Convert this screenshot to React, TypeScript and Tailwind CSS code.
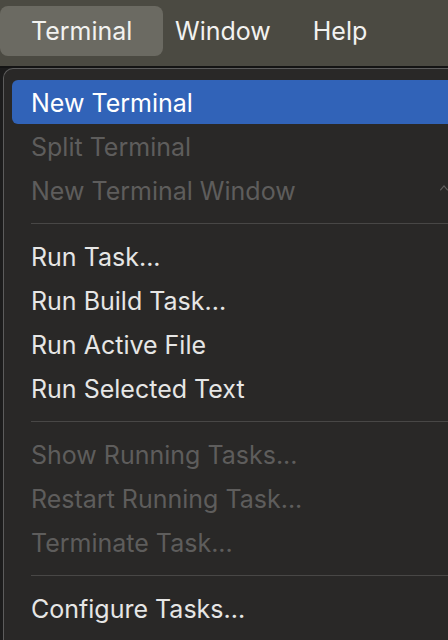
type Item =
  | { kind: "item"; label: string; disabled?: boolean; active?: boolean; shortcut?: boolean }
  | { kind: "sep" };

const ITEMS: Item[] = [
  { kind: "item", label: "New Terminal", active: true },
  { kind: "item", label: "Split Terminal", disabled: true },
  { kind: "item", label: "New Terminal Window", disabled: true, shortcut: true },
  { kind: "sep" },
  { kind: "item", label: "Run Task..." },
  { kind: "item", label: "Run Build Task..." },
  { kind: "item", label: "Run Active File" },
  { kind: "item", label: "Run Selected Text" },
  { kind: "sep" },
  { kind: "item", label: "Show Running Tasks...", disabled: true },
  { kind: "item", label: "Restart Running Task...", disabled: true },
  { kind: "item", label: "Terminate Task...", disabled: true },
  { kind: "sep" },
  { kind: "item", label: "Configure Tasks..." },
];

export default function App() {
  return (
    <div
      className="flex h-[640px] w-[448px] flex-col overflow-hidden bg-[#1c1c1c] text-[25px] antialiased"
      style={{ fontFamily: "Inter, 'Noto Sans', sans-serif" }}
    >
      <div className="flex h-[68px] shrink-0 items-start border-b-2 border-[#141414] bg-[#4b4a42] pt-[6px] text-[#f2f2f0]">
        <div className="flex h-[50px] w-[163px] items-center rounded-lg bg-[#6b6a62] pl-[31px] pt-[2px]">
          Terminal
        </div>
        <div className="ml-[12px] flex h-[50px] items-center pt-[2px]">Window</div>
        <div className="ml-[42px] flex h-[50px] items-center pt-[2px]">Help</div>
      </div>

      <div className="ml-[3px] flex-1 rounded-tl-[10px] border-l border-t border-[#5c5c5c] bg-[#292827] pl-[8px] pt-[11px]">
        {ITEMS.map((item, i) =>
          item.kind === "sep" ? (
            <div key={i} className="flex h-[22px] items-center pl-[19px]">
              <div className="h-px w-full bg-[#484746]" />
            </div>
          ) : (
            <div
              key={i}
              className={
                "flex h-[44px] items-center whitespace-nowrap pl-[19px] pt-[3px] " +
                (item.active
                  ? "rounded-l-[6px] bg-[#3163b8] text-white"
                  : item.disabled
                    ? "text-[#5e5d5c]"
                    : "text-[#e6e6e5]")
              }
            >
              <span className="w-[409px] shrink-0">{item.label}</span>
              {item.shortcut && (
                <svg width="14" height="14" viewBox="0 0 14 14" className="-mt-[10px]">
                  <path d="M1 12 L7 5 L13 12" fill="none" stroke="#5e5d5c" strokeWidth="2.2" strokeLinecap="round" />
                </svg>
              )}
            </div>
          ),
        )}
      </div>
    </div>
  );
}
